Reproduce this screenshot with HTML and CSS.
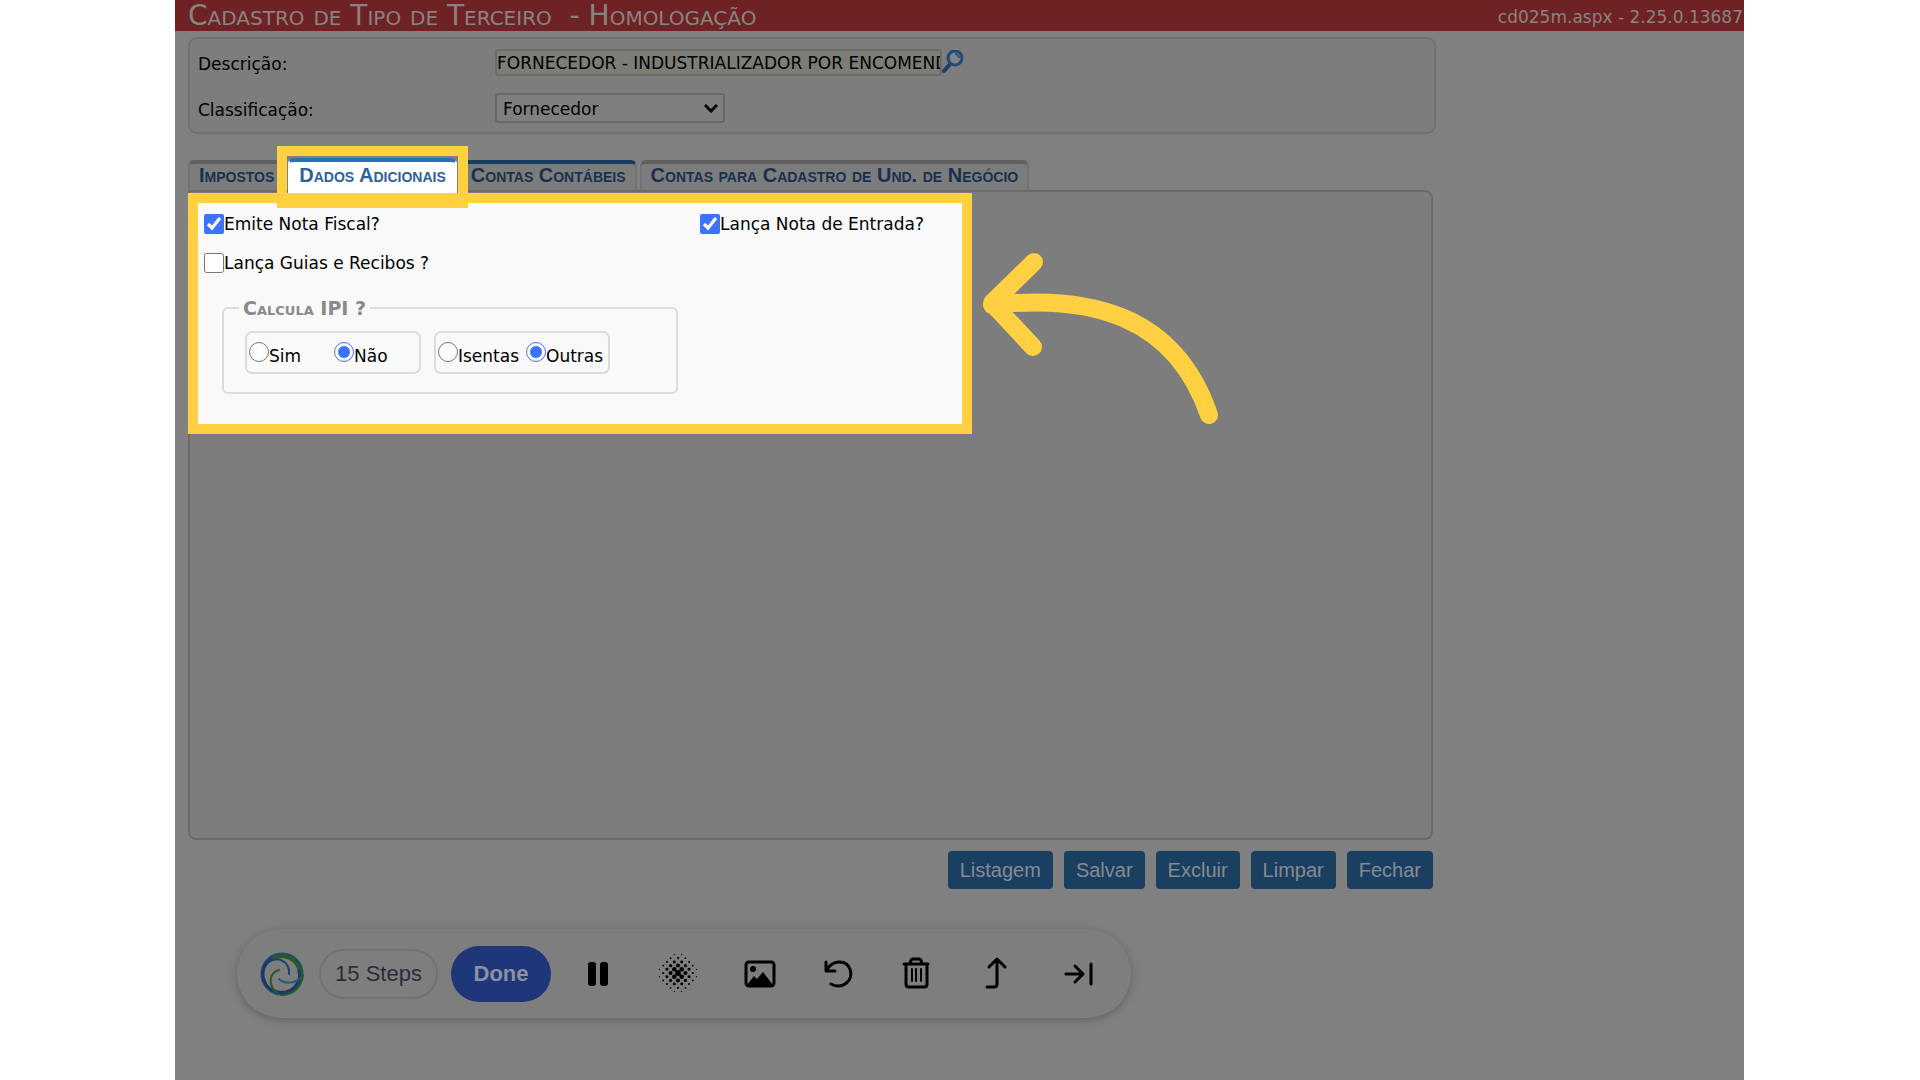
FILE: index.html
```html
<!DOCTYPE html>
<html lang="pt-BR">
<head>
    <meta charset="UTF-8">
    <meta name="viewport" content="width=device-width, initial-scale=1.0">
    <title>Cadastro de Tipo de Terceiro</title>
    <link rel="stylesheet" href="styles.css">
</head>
<body>

    <div class="screen">
        <header class="titlebar">
            <h1>Cadastro de Tipo de Terceiro &nbsp;- Homologação</h1>
            <span class="version">cd025m.aspx - 2.25.0.13687</span>
        </header>

        <main class="content">
            <form class="filters">
                <div class="field">
                    <label for="descricao">Descrição:</label>
                    <input type="text" id="descricao" class="textbox" value="FORNECEDOR - INDUSTRIALIZADOR POR ENCOMENDA">
                    <button type="button" class="search" aria-label="Pesquisar">
                        <svg width="23" height="24" viewBox="0 0 23 24">
                            <path d="M2 21 L8 14" stroke="#1d3f63" stroke-width="4" stroke-linecap="round"/>
                            <circle cx="13" cy="8" r="7" fill="#7b8490" stroke="#24496f" stroke-width="3"/>
                            <path d="M13 4 a4 4 0 0 1 4 4" fill="none" stroke="#2f547a" stroke-width="2"/>
                        </svg>
                    </button>
                </div>
                <div class="field">
                    <label for="classificacao">Classificação:</label>
                    <div class="select-wrap">
                        <select id="classificacao">
                            <option>Fornecedor</option>
                        </select>
                        <svg class="chevron" width="14" height="10" viewBox="0 0 14 10">
                            <path d="M1 2 L7 8 L13 2" fill="none" stroke="#000" stroke-width="3"/>
                        </svg>
                    </div>
                </div>
            </form>

            <nav class="tabs">
                <button type="button" class="tab">Impostos</button>
                <button type="button" class="tab active">Dados Adicionais</button>
                <button type="button" class="tab blue">Contas Contábeis</button>
                <button type="button" class="tab">Contas para Cadastro de Und. de Negócio</button>
            </nav>

            <section class="panel">
                <div class="highlight">
                    <div class="checks">
                        <label><input type="checkbox" checked>Emite Nota Fiscal?</label>
                        <label><input type="checkbox" checked>Lança Nota de Entrada?</label>
                        <label><input type="checkbox">Lança Guias e Recibos ?</label>
                    </div>
                    <fieldset class="ipi">
                        <legend>Calcula IPI ?</legend>
                        <div class="radios wide">
                            <label><input type="radio" name="ipi"><span>Sim</span></label>
                            <label><input type="radio" name="ipi" checked><span>Não</span></label>
                        </div>
                        <div class="radios">
                            <label><input type="radio" name="tipo"><span>Isentas</span></label>
                            <label><input type="radio" name="tipo" checked><span>Outras</span></label>
                        </div>
                    </fieldset>
                </div>
                <svg class="arrow" width="240" height="180" viewBox="980 250 240 180">
                    <path d="M1034 262 L992 303 L1033 347 M992 305 C1090 294 1175 315 1209 415"/>
                </svg>
            </section>

            <div class="actions">
                <button type="button">Listagem</button>
                <button type="button">Salvar</button>
                <button type="button">Excluir</button>
                <button type="button">Limpar</button>
                <button type="button">Fechar</button>
            </div>
        </main>

        <!-- Recorder toolbar -->
        <div class="recorder">
            <svg class="logo" width="46" height="46" viewBox="0 0 46 46" fill="none" stroke-linecap="round">
                <circle cx="23" cy="23" r="20" stroke="#1d4a6b" stroke-width="3"/>
                <path d="M5 30 C1 17 9 7 19 7" stroke="#1b3a63" stroke-width="3"/>
                <path d="M15 7 C30 1 43 12 41 28" stroke="#2b5a28" stroke-width="4"/>
                <path d="M40 20 C43 34 31 43 19 41 C13 40 7 36 5 29" stroke="#1b3a63" stroke-width="3"/>
                <path d="M44 24 C43 36 34 44 22 44" stroke="#2b5a28" stroke-width="2"/>
                <path d="M8 12 C18 4 31 10 30 23" stroke="#1d3f6b" stroke-width="2"/>
                <path d="M41 27 C36 33 25 33 20 28" stroke="#235a78" stroke-width="2"/>
                <path d="M19 42 C8 35 10 22 20 19" stroke="#2b5a28" stroke-width="2"/>
            </svg>
            <button type="button" class="steps">15 Steps</button>
            <button type="button" class="done">Done</button>
            <div class="tools">
                <button type="button" aria-label="Pause">
                    <svg width="40" height="40" viewBox="0 0 40 40"><rect x="10" y="8" width="8" height="24" rx="3"/><rect x="22" y="8" width="8" height="24" rx="3"/></svg>
                </button>
                <button type="button" aria-label="Blur">
                    <svg id="blur" width="40" height="40" viewBox="0 0 40 40"></svg>
                </button>
                <button type="button" aria-label="Image">
                    <svg width="40" height="40" viewBox="0 0 40 40"><rect x="8" y="8" width="28" height="24" rx="3" fill="none" stroke="#000" stroke-width="3"/><circle cx="15" cy="15" r="3"/><path d="M9 31 L16 22 L19 25 L25 18 L35 31 Z"/></svg>
                </button>
                <button type="button" aria-label="Undo">
                    <svg width="40" height="40" viewBox="0 0 40 40" class="line"><path d="M8 8 V17 H17 M9 16 C14 6 28 5 32 15 C36 27 24 36 13 30"/></svg>
                </button>
                <button type="button" aria-label="Delete">
                    <svg width="40" height="40" viewBox="0 0 40 40" class="line"><path d="M6 10 H30 M8 11 V30 Q8 33 11 33 H26 Q29 33 29 30 V11 M12 9 Q13 5 15 5 H21 Q23 5 24 9"/><path d="M14 15 V27 M18 15 V27 M23 15 V27" stroke-width="2"/></svg>
                </button>
                <button type="button" aria-label="Step up">
                    <svg width="40" height="40" viewBox="0 0 40 40" class="line"><path d="M9 33 H16 Q19 33 19 30 V6 M11 13 L19 5 L27 13"/></svg>
                </button>
                <button type="button" aria-label="Collapse">
                    <svg width="40" height="40" viewBox="0 0 40 40" class="line"><path d="M8 20 H25 M17 12 L25 20 L17 28 M33 10 V30"/></svg>
                </button>
            </div>
        </div>
    </div>

    <script>
        // Halftone dots, bigger towards the middle
        const blur = document.getElementById('blur');
        let dots = '';
        for (let r = 0; r < 11; r++) {
            for (let c = 0; c < 11; c++) {
                if ((r + c) % 2) continue;
                const x = 20 + (c - 5) * 3.7;
                const y = 19 + (r - 5) * 3.7;
                const d = Math.hypot(x - 20, y - 19);
                const size = 2.9 - d * 0.12;
                if (size > 0.4) dots += `<circle cx="${x}" cy="${y}" r="${size}"/>`;
            }
        }
        blur.innerHTML = dots;
    </script>

</body>
</html>
```
FILE: styles.css
```css
:root {
    --yellow: #ffd042;
    --line: #6b6b6b;
    --blue: #1b3f61;
}

* {
    box-sizing: border-box;
}

body {
    margin: 0;
    background-color: #fff;
    font-family: "DejaVu Sans", Tahoma, Verdana, sans-serif;
    font-size: 17px;
    color: #000;
}

button, input, select {
    font: inherit;
    color: inherit;
    margin: 0;
}

button {
    border: none;
    background: none;
    padding: 0;
    cursor: pointer;
}

.screen {
    margin: 0 176px 0 175px;
    min-height: 100vh;
    background-color: #808080;
}

.titlebar {
    display: flex;
    justify-content: space-between;
    align-items: center;
    height: 31px;
    padding: 0 1px 0 13px;
    background-color: #6e2224;
    color: #8b8383;
}

.titlebar h1 {
    margin: 0;
    font-size: 28px;
    line-height: 28px;
    font-weight: normal;
    font-variant: small-caps;
}

.version {
    padding-top: 2px;
}

.content {
    max-width: 1261px;
    padding: 6px 0 0 13px;
}

/* Search form */
.filters {
    display: flex;
    flex-direction: column;
    gap: 17px;
    height: 97px;
    padding: 9px 8px;
    border: 2px solid #717171;
    border-radius: 9px;
    background-color: #7d7d7d;
}

.field {
    display: flex;
    align-items: center;
    height: 30px;
}

.field label {
    width: 297px;
    padding-top: 3px;
}

.textbox {
    width: 447px;
    height: 27px;
    padding: 1px 0 0;
    border: 2px solid #6b6b69;
    border-radius: 3px;
    background-color: #7c7d76;
}

.search {
    display: flex;
}

.select-wrap {
    position: relative;
}

select {
    appearance: none;
    width: 230px;
    height: 30px;
    padding: 1px 6px 0;
    border: 2px solid #686868;
    border-radius: 3px;
    background-color: #7f7f7f;
}

.chevron {
    position: absolute;
    right: 7px;
    top: 10px;
    pointer-events: none;
}

/* Tabs */
.tabs {
    display: flex;
    gap: 3px;
    margin-top: 26px;
}

.tab {
    height: 30px;
    padding: 0 9px 5px;
    border: 2px solid #727272;
    border-top: 4px solid #606060;
    border-bottom: none;
    border-radius: 6px 6px 0 0;
    background-color: #7c7c7c;
    color: #18314e;
    font-family: "Liberation Sans", Arial, sans-serif;
    font-size: 20px;
    font-weight: bold;
    font-variant: small-caps;
    line-height: 20px;
    white-space: nowrap;
}

.tab.blue {
    border-top-color: #173d63;
}

.tab.active {
    position: relative;
    z-index: 2;
    height: 35px;
    margin: -2px 0 -3px;
    border-color: #fff;
    border-top-color: #2c6fb3;
    background-color: #fff;
    color: #2e619c;
}

.tab.active::after {
    content: "";
    position: absolute;
    inset: -16px -13px -15px -13px;
    border: 10px solid var(--yellow);
    border-bottom-width: 15px;
}

.panel {
    position: relative;
    margin-right: 3px;
    min-height: 650px;
    border: 2px solid var(--line);
    border-radius: 0 8px 8px 8px;
    background-color: #7d7d7d;
}

.highlight {
    width: calc(63% + 2px);
    height: 241px;
    margin: 1px 0 0 -2px;
    padding: 11px 6px;
    border: 10px solid var(--yellow);
    background-color: #f9f9f9;
}

.checks {
    display: grid;
    grid-template-columns: 496px 1fr;
    row-gap: 19px;
}

.checks label, .radios label {
    display: flex;
    align-items: center;
    height: 20px;
}

input[type="checkbox"], input[type="radio"] {
    width: 20px;
    height: 20px;
    margin: 0;
    accent-color: #3b73ff;
}

.ipi {
    display: flex;
    gap: 13px;
    width: 456px;
    height: 93px;
    margin: 28px 0 0 18px;
    padding: 16px 21px;
    border: 2px solid #dcdcdc;
    border-radius: 6px;
}

.ipi legend {
    padding: 0 4px;
    margin-left: -6px;
    color: #8a8a8a;
    font-size: 19px;
    font-weight: bold;
    font-variant: small-caps;
    line-height: 14px;
}

.radios {
    display: flex;
    gap: 7px;
    width: 176px;
    height: 43px;
    padding: 9px 0 9px 2px;
    border: 2px solid #dcdcdc;
    border-radius: 7px;
}

.radios.wide {
    gap: 33px;
}

.radios span {
    padding-top: 8px;
}

.arrow {
    position: absolute;
    left: 790px;
    top: 58px;
    fill: none;
    stroke: var(--yellow);
    stroke-width: 18;
    stroke-linecap: round;
    stroke-linejoin: round;
}

/* Bottom buttons */
.actions {
    display: flex;
    justify-content: flex-end;
    gap: 11px;
    margin: 11px 3px 0 0;
}

.actions button {
    height: 38px;
    padding: 0 12px;
    border-radius: 4px;
    background-color: var(--blue);
    color: #858b91;
    font-family: "Liberation Sans", Arial, sans-serif;
    font-size: 20px;
}

.recorder {
    display: flex;
    align-items: center;
    width: fit-content;
    height: 89px;
    margin: 40px 0 0 62px;
    padding: 0 33px 0 22px;
    border-radius: 45px;
    background-color: #7e7e7e;
    box-shadow: 0 2px 10px rgba(0, 0, 0, 0.25);
    font-family: "Liberation Sans", Arial, sans-serif;
    font-size: 22px;
}

.steps {
    width: 119px;
    height: 50px;
    margin: 0 13px 0 14px;
    border: 2px solid #6f7278;
    border-radius: 25px;
    color: #2b2e38;
}

.done {
    width: 100px;
    height: 56px;
    border-radius: 28px;
    background-color: #1f3779;
    color: #8b91a1;
    font-weight: bold;
}

.tools {
    display: flex;
    gap: 40px;
    margin-left: 27px;
}

.tools button {
    display: flex;
}

.line {
    fill: none;
    stroke: #000;
    stroke-width: 3;
    stroke-linecap: round;
    stroke-linejoin: round;
}
```
